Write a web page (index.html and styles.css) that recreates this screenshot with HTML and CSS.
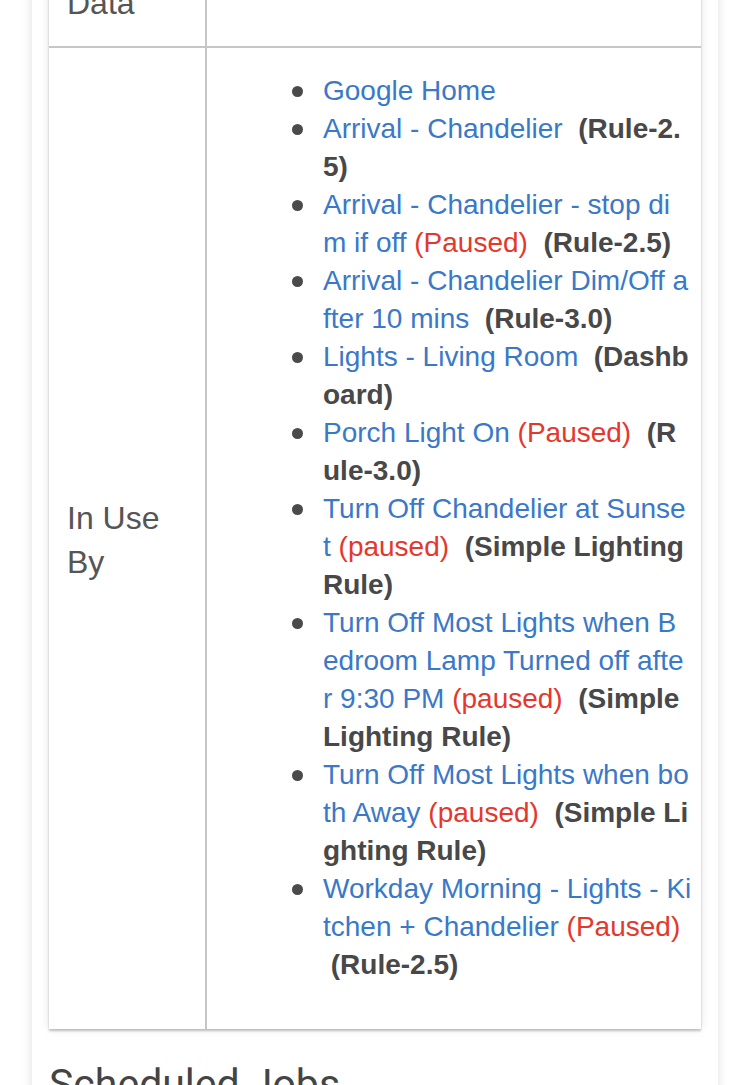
FILE: index.html
```html
<!DOCTYPE html>
<html lang="en">
<head>
    <meta charset="UTF-8">
    <meta name="viewport" content="width=device-width, initial-scale=1.0">
    <title>Device Details</title>
    <link rel="stylesheet" href="styles.css">
</head>
<body>

    <div class="card">
        <table class="details">
            <tr>
                <td class="label">Data</td>
                <td class="value"></td>
            </tr>
            <tr>
                <td class="label">In Use By</td>
                <td class="value uses">
                    <ul>
                        <li><a href="#">Google Home</a></li>
                        <li><a href="#">Arrival - Chandelier</a> <b>&nbsp;(Rule-2.5)</b></li>
                        <li><a href="#">Arrival - Chandelier - stop dim if off</a> <span class="paused">(Paused)</span> <b>&nbsp;(Rule-2.5)</b></li>
                        <li><a href="#">Arrival - Chandelier Dim/Off after 10 mins</a> <b>&nbsp;(Rule-3.0)</b></li>
                        <li><a href="#">Lights - Living Room</a> <b>&nbsp;(Dashboard)</b></li>
                        <li><a href="#">Porch Light On</a> <span class="paused">(Paused)</span> <b>&nbsp;(Rule-3.0)</b></li>
                        <li><a href="#">Turn Off Chandelier at Sunset</a> <span class="paused">(paused)</span> <b>&nbsp;(Simple Lighting Rule)</b></li>
                        <li><a href="#">Turn Off Most Lights when Bedroom Lamp Turned off after 9:30 PM</a> <span class="paused">(paused)</span> <b>&nbsp;(Simple Lighting Rule)</b></li>
                        <li><a href="#">Turn Off Most Lights when both Away</a> <span class="paused">(paused)</span> <b>&nbsp;(Simple Lighting Rule)</b></li>
                        <li><a href="#">Workday Morning - Lights - Kitchen + Chandelier</a> <span class="paused">(Paused)</span> <b>&nbsp;(Rule-2.5)</b></li>
                    </ul>
                </td>
            </tr>
        </table>

        <h3 class="section-title">Scheduled Jobs</h3>
    </div>

</body>
</html>
```

FILE: styles.css
```css
/* Reset */
* {
    margin: 0;
    padding: 0;
    box-sizing: border-box;
}

body {
    background: #fff;
    font-family: "Liberation Sans", Arial, sans-serif;
    color: #555;
    overflow: hidden;
}

/* Card (page is scrolled, top of card is off screen) */
.card {
    background: #fff;
    margin: -59px 27px 0 32px;
    padding: 17px 17px 40px;
    box-shadow: 0 0 10px rgba(0, 0, 0, 0.13);
}

/* Details table */
.details {
    width: 100%;
    border-collapse: collapse;
    box-shadow: 0 2px 2px rgba(0, 0, 0, 0.22), 0 0 10px rgba(0, 0, 0, 0.1);
}

.details td {
    vertical-align: middle;
}

.details tr + tr td {
    border-top: 2px solid #c6c6c6;
}

.details .label {
    width: 157px;
    padding: 23px 18px 21px;
    border-right: 2px solid #c6c6c6;
    font-size: 32px;
    line-height: 44px;
    color: #555;
}

.details .uses {
    padding: 24px 9.5px 45px 18px;
}

/* In use by list */
.uses ul {
    list-style: none;
    padding-left: 98px;
    font-size: 28px;
    line-height: 38px;
    color: #444;
    word-break: break-all;
}

.uses li {
    position: relative;
}

/* Bullet */
.uses li::before {
    content: "";
    position: absolute;
    left: -31px;
    top: 14px;
    width: 11px;
    height: 11px;
    border-radius: 50%;
    background: #4a4a4a;
}

.uses a {
    color: #3a78c8;
    text-decoration: none;
}

.uses .paused {
    color: #e5382d;
}

.uses b {
    color: #484848;
}

/* Section heading */
.section-title {
    margin-top: 31px;
    font-family: Roboto, "Liberation Sans", sans-serif;
    font-size: 41px;
    font-weight: 400;
    color: #444;
}
```
